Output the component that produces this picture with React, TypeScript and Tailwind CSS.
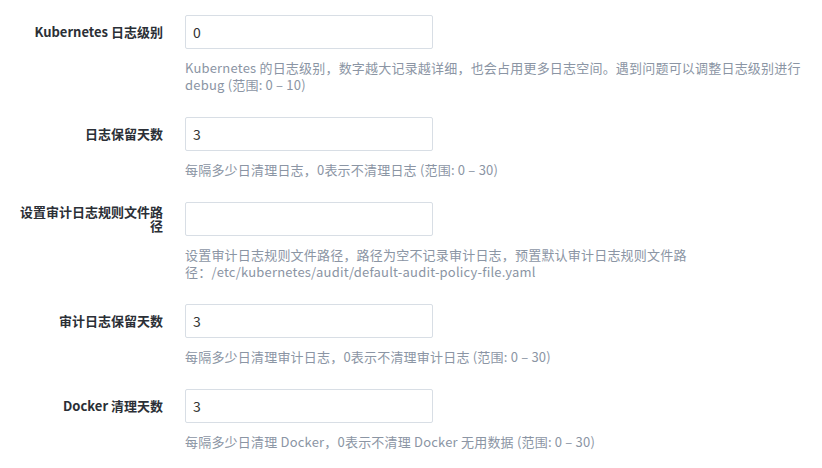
import { useState } from "react";

type Field = {
  key: string;
  label: string;
  value: string;
  help: string;
};

const FIELDS: Field[] = [
  {
    key: "k8sLogLevel",
    label: "Kubernetes 日志级别",
    value: "0",
    help: "Kubernetes 的日志级别，数字越大记录越详细，也会占用更多日志空间。遇到问题可以调整日志级别进行 debug (范围: 0 – 10)",
  },
  {
    key: "logRetention",
    label: "日志保留天数",
    value: "3",
    help: "每隔多少日清理日志，0表示不清理日志 (范围: 0 – 30)",
  },
  {
    key: "auditPolicy",
    label: "设置审计日志规则文件路径",
    value: "",
    help: "设置审计日志规则文件路径，路径为空不记录审计日志，预置默认审计日志规则文件路径：/etc/kubernetes/audit/default-audit-policy-file.yaml",
  },
  {
    key: "auditRetention",
    label: "审计日志保留天数",
    value: "3",
    help: "每隔多少日清理审计日志，0表示不清理审计日志 (范围: 0 – 30)",
  },
  {
    key: "dockerClean",
    label: "Docker 清理天数",
    value: "3",
    help: "每隔多少日清理 Docker，0表示不清理 Docker 无用数据 (范围: 0 – 30)",
  },
];

export default function App() {
  const [values, setValues] = useState<Record<string, string>>(() =>
    Object.fromEntries(FIELDS.map((f) => [f.key, f.value])),
  );

  return (
    <div className="min-h-[468px] w-[822px] bg-white pt-[15px] font-['Noto_Sans_CJK_SC',sans-serif]">
      <form className="flex flex-col gap-[24px]">
        {FIELDS.map((f) => (
          <div key={f.key} className="grid grid-cols-[163px_620px] gap-x-[22px]">
            {/* ラベル列：入力欄の中央に揃える */}
            <label
              htmlFor={f.key}
              className="flex items-center justify-end pl-[16px] text-right text-[13px] font-bold leading-[14px] text-[#2b2f36]"
            >
              {f.label}
            </label>
            <input
              id={f.key}
              value={values[f.key]}
              onChange={(e) => setValues({ ...values, [f.key]: e.target.value })}
              className="h-[34px] w-[248px] rounded-[2px] border border-[#d8dee5] px-[7px] text-[14px] text-[#333] outline-none"
            />
            <div />
            <p className="mt-[10px] text-[13px] leading-[17px] tracking-[0.2px] text-[#8b95a4]">
              {f.help}
            </p>
          </div>
        ))}
      </form>
    </div>
  );
}
